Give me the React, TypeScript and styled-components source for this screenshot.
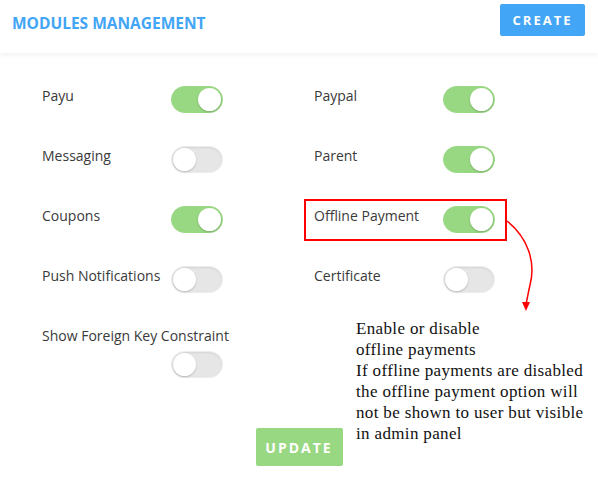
import React, { useState } from 'react'
import styled, { createGlobalStyle, css } from 'styled-components'

const GlobalStyle = createGlobalStyle`
  body {
    margin: 0;
    background: #ffffff;
    font-family: 'Open Sans', 'Noto Sans', sans-serif;
  }
`

const Page = styled.div`
  position: relative;
  width: 598px;
  height: 479px;
  overflow: hidden;
`
const Header = styled.header`
  height: 53px;
  box-sizing: border-box;
  padding: 4px 12px 0;
  display: flex;
  justify-content: space-between;
  align-items: flex-start;
  box-shadow: 0 2px 5px rgba(0, 0, 0, 0.06);
`
const Title = styled.h1`
  margin: 0;
  padding-top: 3px;
  line-height: 32px;
  font-size: 15.5px;
  font-weight: 700;
  color: #42a5f5;
`
const Button = styled.button<{ variant: 'blue' | 'green' }>`
  border: none;
  border-radius: 2px;
  color: #ffffff;
  font-family: 'Open Sans', sans-serif;
  font-weight: 700;
  letter-spacing: 2px;
  cursor: pointer;
  ${(props) =>
    props.variant === 'blue' &&
    css`
      background: #42a5f5;
      width: 85px;
      height: 32px;
      font-size: 13px;
      margin-right: 1px;
    `}
  ${(props) =>
    props.variant === 'green' &&
    css`
      background: #98d883;
      width: 87px;
      height: 38px;
      font-size: 14px;
    `}
`
const Body = styled.div`
  padding: 33px 0 0 42px;
`
const Grid = styled.div`
  display: grid;
  grid-template-columns: 272px 272px;
  grid-auto-rows: 60px;
`
const Cell = styled.div<{ stacked?: boolean }>`
  display: flex;
  align-items: flex-start;
  flex-wrap: ${(props) => (props.stacked ? 'wrap' : 'nowrap')};
`
const Label = styled.span<{ stacked?: boolean }>`
  width: ${(props) => (props.stacked ? '260px' : '129px')};
  font-size: 14px;
  color: #3a3a3a;
  line-height: 20px;
`
const Track = styled.span<{ on: boolean }>`
  position: relative;
  display: inline-block;
  width: 52px;
  height: 27px;
  box-sizing: border-box;
  border-radius: 14px;
  border: 1px solid ${(props) => (props.on ? '#98d883' : '#ececec')};
  background: ${(props) => (props.on ? '#98d883' : '#e6e6e6')};
  box-shadow: ${(props) =>
    props.on ? 'none' : 'inset 0 1px 2px rgba(0,0,0,0.08)'};
  cursor: pointer;
`
const Knob = styled.span<{ on: boolean }>`
  position: absolute;
  top: 1px;
  left: ${(props) => (props.on ? '26px' : '1px')};
  width: 23px;
  height: 23px;
  border-radius: 50%;
  background: #ffffff;
  box-shadow: 0 1px 2px rgba(0, 0, 0, 0.2);
`
const StackedToggle = styled.div`
  margin-left: 129px;
  margin-top: 1px;
`
const Footer = styled.div`
  display: flex;
  justify-content: center;
  padding-top: 42px;
`
const Highlight = styled.div`
  position: absolute;
  left: 304px;
  top: 199px;
  width: 203px;
  height: 42px;
  box-sizing: border-box;
  border: 2px solid #ff0000;
`
const Arrow = styled.svg`
  position: absolute;
  left: 0;
  top: 0;
  pointer-events: none;
`
const Note = styled.div`
  position: absolute;
  left: 356px;
  top: 318px;
  font-family: 'Liberation Serif', 'Times New Roman', serif;
  font-size: 17px;
  letter-spacing: 0.35px;
  line-height: 21px;
  color: #111111;
`

const Toggle = ({ on, onClick }: { on: boolean; onClick: () => void }) => (
  <Track on={on} onClick={onClick}>
    <Knob on={on} />
  </Track>
)

const initial = [
  { name: 'Payu', on: true },
  { name: 'Paypal', on: true },
  { name: 'Messaging', on: false },
  { name: 'Parent', on: true },
  { name: 'Coupons', on: true },
  { name: 'Offline Payment', on: true },
  { name: 'Push Notifications', on: false },
  { name: 'Certificate', on: false },
]

export default function App() {
  const [modules, setModules] = useState(initial)
  const [foreignKey, setForeignKey] = useState(false)

  const flip = (index: number) =>
    setModules(modules.map((m, i) => (i === index ? { ...m, on: !m.on } : m)))

  return (
    <Page>
      <GlobalStyle />
      <Header>
        <Title>MODULES MANAGEMENT</Title>
        <Button variant="blue">CREATE</Button>
      </Header>
      <Body>
        <Grid>
          {modules.map((m, index) => (
            <Cell key={m.name}>
              <Label>{m.name}</Label>
              <Toggle on={m.on} onClick={() => flip(index)} />
            </Cell>
          ))}
          <Cell stacked>
            <Label stacked>Show Foreign Key Constraint</Label>
            <StackedToggle>
              <Toggle on={foreignKey} onClick={() => setForeignKey(!foreignKey)} />
            </StackedToggle>
          </Cell>
        </Grid>
      </Body>
      <Footer>
        <Button variant="green">UPDATE</Button>
      </Footer>

      <Highlight />
      <Arrow width="598" height="479">
        <path
          d="M507 221 C 528 238, 536 262, 530 285 C 528 294, 527 300, 526 304"
          fill="none"
          stroke="#ff0000"
          strokeWidth="1.5"
        />
        <path d="M522 302 L526 311 L530 302 Z" fill="#ff0000" />
      </Arrow>
      <Note>
        Enable or disable
        <br />
        offline payments
        <br />
        If offline payments are disabled
        <br />
        the offline payment option will
        <br />
        not be shown to user but visible
        <br />
        in admin panel
      </Note>
    </Page>
  )
}
